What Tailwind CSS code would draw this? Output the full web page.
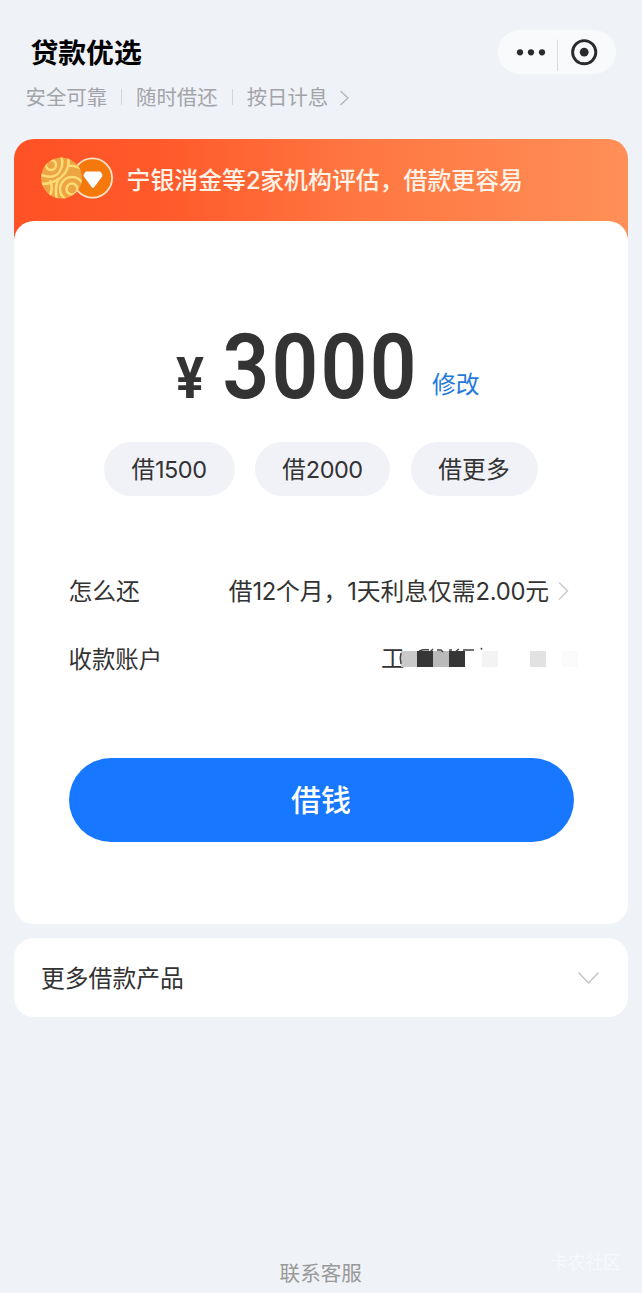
<!DOCTYPE html>
<html lang="zh-CN">
<head>
<meta charset="utf-8">
<title>贷款优选</title>
<script src="https://cdn.jsdelivr.net/npm/@tailwindcss/browser@4"></script>
</head>
<body class="bg-[#eff2f7] font-['Inter','Noto_Sans_CJK_SC',sans-serif] text-[#333]">
<div class="relative flex h-[1293px] w-[642px] flex-col overflow-hidden pr-[14px] pl-[13.500px]">
  <header class="flex h-[74px] items-end justify-between pr-[12px] pl-[17px]">
    <h1 class="mb-[1px] text-[27.800px] leading-[40px] font-bold text-black">贷款优选</h1>
    <div class="flex h-[44px] w-[118px] items-center rounded-full bg-[#f9fafc]">
      <svg class="h-[44px] w-[118px]" viewBox="0 0 118 44">
        <g fill="#2b2b2e"><circle cx="22" cy="22.300" r="3.100"/><circle cx="33" cy="22.300" r="3.100"/><circle cx="44" cy="22.300" r="3.100"/><circle cx="86.200" cy="22.200" r="4.400"/></g>
        <path d="M59.500 9.500V41" stroke="#d9dade"/>
        <circle cx="86.200" cy="22.200" r="11.600" fill="none" stroke="#2b2b2e" stroke-width="2.900"/>
      </svg>
    </div>
  </header>
  <div class="flex h-[65px] items-start pt-[9px] pl-[12px] text-[20.400px] leading-[30px] text-[#a3a4a9]">
    <span>安全可靠</span>
    <i class="mt-[6px] mr-[14px] ml-[14px] h-[16px] w-px bg-[#d3d5da]"></i>
    <span>随时借还</span>
    <i class="mt-[6px] mr-[14px] ml-[14px] h-[16px] w-px bg-[#d3d5da]"></i>
    <span>按日计息</span>
    <svg class="mt-[7px] ml-[11px] h-[16px] w-[11px]" viewBox="0 0 11 16" fill="none" stroke="#b4b6bb" stroke-width="1.400"><path d="M1.500 1 9 8l-7.500 7"/></svg>
  </div>

  <main class="h-[785px] rounded-[20px] bg-[linear-gradient(90deg,#ff5125_0%,#ff5a2b_25%,#ff7640_55%,#ff8f58_100%)] bg-[length:100%_120px] bg-no-repeat">
    <div class="flex h-[82px] items-center pl-[27px]">
      <svg class="mt-[-5px] h-[42px] w-[74px]" viewBox="0 0 74 42">
        <defs><clipPath id="ball"><circle cx="20.500" cy="21" r="20.500"/></clipPath></defs>
        <circle cx="51.500" cy="21" r="19.600" fill="#f5780c" stroke="#ffe3c8" stroke-width="1.800"/>
        <path d="M45.500 14.500h13q1 0 1.500.7l1.300 2.600q.5 1-.3 2l-7.600 10.200q-1.400 1.700-2.800 0L43 19.800q-.8-1-.3-2l1.300-2.600q.5-.7 1.500-.7z" fill="#fff"/>
        <g clip-path="url(#ball)" fill="none">
          <rect width="42" height="42" fill="#eda443"/>
          <g stroke="#ffdb76" stroke-width="2.500">
            <circle cx="10" cy="8" r="5"/>
            <path d="M0 18q14 5 19-4 4-7 1-15M27-1q2 10-3 17-8 11-24 11M27 9q7-1 15 4M8 40q5-7 1-17M18 21q-5 9-2 22"/>
            <circle cx="31" cy="32" r="5.500"/><circle cx="31" cy="32" r="12"/>
          </g>
        </g>
      </svg>
      <p class="mt-[1px] ml-[12px] text-[23.900px] font-medium whitespace-nowrap text-[#fff3e8]">宁银消金等<span class="tracking-[-0.500px]">2</span>家机构评估，借款更容易</p>
    </div>

    <section class="flex h-[703px] flex-col rounded-[20px] bg-white px-[55px]">
      <div class="flex h-[221px] items-end pl-[105.500px]">
        <svg class="h-[110px] w-[246px] overflow-visible" viewBox="0 0 246 110" fill="#333">
          <g font-family="Roboto, sans-serif">
            <text x="2" y="66" font-size="57" font-weight="700" textLength="28" lengthAdjust="spacingAndGlyphs">¥</text>
            <text transform="translate(48.500 66) scale(.91 1)" font-size="90" font-weight="600" letter-spacing="2.500">3000</text>
          </g>
        </svg>
        <a class="mb-[39px] ml-[12px] text-[23.800px] leading-[36px] whitespace-nowrap text-[#1f7adb]">修改</a>
      </div>
      <div class="flex h-[54px] gap-[20.500px] pl-[35px] text-[23.500px] leading-[56px]">
        <button class="w-[131px] rounded-full bg-[#f1f2f8]">借<span class="tracking-[-0.500px]">1500</span></button>
        <button class="w-[135px] rounded-full bg-[#f1f2f8]">借<span class="tracking-[-0.500px]">2000</span></button>
        <button class="w-[127px] rounded-full bg-[#f1f2f8] text-[23.800px]">借更多</button>
      </div>
      <div class="mt-[77px] flex h-[36px] items-center justify-between text-[23.800px]">
        <span class="mt-[1px]">怎么还</span>
        <span class="flex items-center pr-[4px]"><span class="mt-[1px] whitespace-nowrap">借<span class="tracking-[-0.400px]">12</span>个月，<span class="tracking-[-0.400px]">1</span>天利息仅需<span class="tracking-[-0.300px]">2.00</span>元</span>
          <svg class="ml-[8px] h-[20px] w-[12px]" viewBox="0 0 12 20" fill="none" stroke="#ccc" stroke-width="1.500"><path d="M2 1.500 10.500 10 2 18.500"/></svg>
        </span>
      </div>
      <div class="mt-[32px] flex h-[36px] items-center justify-between text-[23.400px]">
        <span class="mt-[1px]">收款账户</span>
        <span class="flex items-center"><span class="w-[19px] whitespace-nowrap">工</span>
          <svg class="h-[36px] w-[173px] overflow-visible" viewBox="400 641 173 36">
            <rect x="401" y="651" width="16" height="16" fill="#c9c9c9"/>
            <rect x="417" y="651" width="16" height="16" fill="#363636"/>
            <rect x="433" y="651" width="16" height="16" fill="#bababa"/>
            <rect x="449" y="651" width="16" height="16" fill="#363636"/>
            <rect x="482" y="651" width="16" height="16" fill="#f3f3f3"/>
            <rect x="530" y="651" width="16" height="16" fill="#e2e2e2"/>
            <rect x="562" y="651" width="16" height="16" fill="#fbfbfb"/>
            <path d="M401 653q-1.500 5 0 11M419 651l4-1.200h6M430 652l3-3M437 650h4l2 2M449 650h3M455 652l4-3M463 650h11M481 648l1 1.500" fill="none" stroke="#444" stroke-width="1.500"/>
          </svg>
        </span>
      </div>
      <button class="mt-[81px] h-[84px] w-[505px] rounded-full bg-[#1777ff] pt-[1px] text-[30px] font-medium text-white">借钱</button>
    </section>
  </main>

  <section class="mt-[14px] flex h-[79px] items-center justify-between rounded-[20px] bg-white pr-[28px] pl-[27.500px] text-[23.800px]">
    <span class="mt-[2px]">更多借款产品</span>
    <svg class="h-[16px] w-[23px]" viewBox="0 0 23 16" fill="none" stroke="#c4c4c4" stroke-width="1.500"><path d="M1.500 2.500 11.500 13 21.500 2.500"/></svg>
  </section>

  <footer class="mt-auto flex h-[38px] items-center justify-center text-[20.600px] text-[#999]">联系客服</footer>
  <div class="absolute top-[1251px] left-[550px] text-[17.700px] leading-[24px] text-[#f8fafd]">卡农社区</div>
</div>
</body>
</html>
